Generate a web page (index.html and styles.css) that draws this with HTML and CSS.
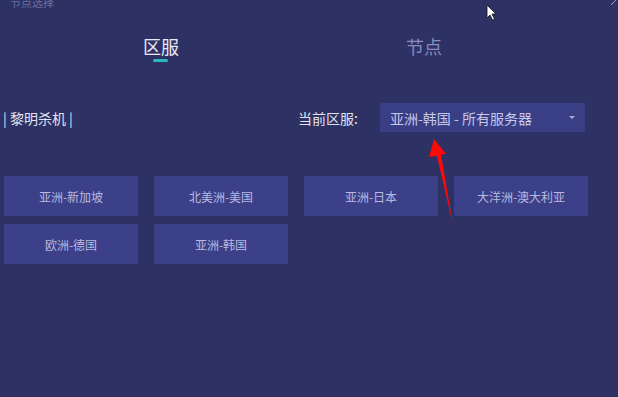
FILE: index.html
```html
<!DOCTYPE html>
<html lang="zh-CN">
<head>
  <meta charset="UTF-8" />
  <title>节点选择</title>
  <link rel="stylesheet" href="styles.css">
</head>
<body>
  <div class="window">
    <div class="title">节点选择</div>
    <svg class="corner" width="8" height="6" viewBox="0 0 8 6"><path d="M1 5 L6 0" stroke="#9a9dc8" stroke-width="1"/></svg>

    <div class="tabs">
      <div class="tab active">区服<span class="bar"></span></div>
      <div class="tab">节点</div>
    </div>

    <div class="game-row">
      <div class="game">| 黎明杀机 |</div>
      <div class="current">
        <span class="label">当前区服:</span>
        <div class="select">
          <span>亚洲-韩国 - 所有服务器</span>
          <span class="caret"></span>
        </div>
      </div>
    </div>

    <div class="regions">
      <div class="region">亚洲-新加坡</div>
      <div class="region">北美洲-美国</div>
      <div class="region">亚洲-日本</div>
      <div class="region">大洋洲-澳大利亚</div>
      <div class="region">欧洲-德国</div>
      <div class="region">亚洲-韩国</div>
    </div>

    <!-- annotation arrow -->
    <svg class="pointer-arrow" width="40" height="100" viewBox="0 0 40 100">
      <path d="M10 0 L22 15 L17 15.5 L29 86 L13 17 L5 18 Z" fill="#ff0a0a"/>
    </svg>

    <!-- mouse cursor -->
    <svg class="cursor" width="12" height="18" viewBox="0 0 12 18">
      <path d="M1 1 L1 14 L4 11 L6.5 16 L8.5 15 L6 10 L10 10 Z" fill="#ffffff" stroke="#111" stroke-width="0.8" stroke-linejoin="round"/>
    </svg>
  </div>
</body>
</html>
```

FILE: styles.css
```css
body { margin: 0; background: #2e3163; font-family: "Noto Sans CJK SC", "Noto Sans", sans-serif; }
.window { position: relative; width: 618px; height: 397px; overflow: hidden; background: #2e3163; }
.title { font-size: 11px; line-height: 14px; color: #6c70a3; padding-left: 10px; margin-top: -5px; height: 13px; }
.corner { position: absolute; right: 0; top: 0; }
.tabs { display: flex; gap: 227px; padding-left: 143px; margin-top: 26px; }
.tab { position: relative; font-size: 18px; line-height: 24px; color: #878bbd; }
.tab.active { color: #e8e9f6; }
.tab .bar { position: absolute; left: 10px; top: 25px; width: 15px; height: 3px; border-radius: 2px; background: #2bb6c6; }
.game-row { display: flex; justify-content: space-between; align-items: center; width: 582px; padding-left: 3px; margin-top: 45px; }
.game { font-size: 14px; color: #e2e3f1; }
.current { display: flex; align-items: center; gap: 22px; }
.label { font-size: 14px; color: #e2e3f1; }
.select { box-sizing: border-box; display: flex; justify-content: space-between; align-items: center; width: 205px; height: 29px; padding: 0 10px 0 10px; background: #3a3e84; border-radius: 2px; font-size: 14px; color: #c6c8ea; }
.caret { width: 0; height: 0; border-left: 3px solid transparent; border-right: 3px solid transparent; border-top: 3px solid #a8abd4; }
.regions { display: grid; grid-template-columns: repeat(4, 134px); grid-auto-rows: 40px; gap: 8px 16px; padding-left: 4px; margin-top: 44px; }
.region { display: flex; align-items: center; justify-content: center; background: #3c4089; border-radius: 2px; font-size: 12px; color: #b6b9e0; }
.pointer-arrow { position: absolute; left: 424px; top: 139px; }
.cursor { position: absolute; left: 486px; top: 4px; }
```
